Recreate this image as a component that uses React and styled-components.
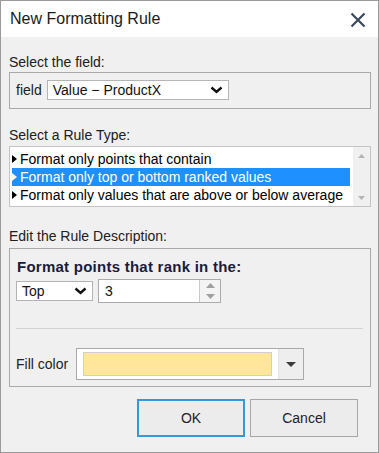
import React from "react";
import styled, { createGlobalStyle } from "styled-components";

const GlobalStyle = createGlobalStyle`
  html, body {
    margin: 0;
    padding: 0;
    background: #ffffff;
  }
  * {
    box-sizing: border-box;
  }
`;

const rules = [
  "Format only points that contain",
  "Format only top or bottom ranked values",
  "Format only values that are above or below average",
];

const Chevron = () => (
  <svg width="13" height="8" viewBox="0 0 13 8">
    <polyline
      points="1.5,1.5 6.5,6 11.5,1.5"
      fill="none"
      stroke="#111"
      strokeWidth="2.4"
    />
  </svg>
);

const Triangle = ({ down, color, w = 7, h = 4 }) => (
  <svg width={w} height={h} viewBox={`0 0 ${w} ${h}`}>
    <polygon
      points={down ? `0,0 ${w},0 ${w / 2},${h}` : `0,${h} ${w},${h} ${w / 2},0`}
      fill={color}
    />
  </svg>
);

export default function App() {
  return (
    <>
      <GlobalStyle />
      <Dialog>
        <TitleBar>
          <Title>New Formatting Rule</Title>
          <CloseButton aria-label="Close">
            <svg width="16" height="16" viewBox="0 0 16 16">
              <path
                d="M1.5 1.5 L14.5 14.5 M14.5 1.5 L1.5 14.5"
                stroke="#3b4a5b"
                strokeWidth="2.2"
              />
            </svg>
          </CloseButton>
        </TitleBar>

        <Body>
          <SectionLabel $top={17}>Select the field:</SectionLabel>
          <GroupBox $top={2}>
            <FieldRow>
              <FieldName>field</FieldName>
              <Select $width={182}>
                <span>Value − ProductX</span>
                <Chevron />
              </Select>
            </FieldRow>
          </GroupBox>

          <SectionLabel $top={18}>Select a Rule Type:</SectionLabel>
          <ListBox>
            <ListRows>
              {rules.map((rule, i) => (
                <ListRow key={rule} $selected={i === 1}>
                  <Marker>
                    <svg width="5" height="8" viewBox="0 0 5 8">
                      <polygon
                        points="0,0 5,4 0,8"
                        fill={i === 1 ? "#ffffff" : "#000000"}
                      />
                    </svg>
                  </Marker>
                  {rule}
                </ListRow>
              ))}
            </ListRows>
            <ScrollBar>
              <Triangle color="#b4b4b4" />
              <Triangle down color="#b4b4b4" />
            </ScrollBar>
          </ListBox>

          <SectionLabel $top={21}>Edit the Rule Description:</SectionLabel>
          <DescriptionBox>
            <Heading>Format points that rank in the:</Heading>
            <RankRow>
              <Select $width={77}>
                <span>Top</span>
                <Chevron />
              </Select>
              <NumberInput>
                <NumberValue>3</NumberValue>
                <Spinner>
                  <Triangle color="#a0a0a0" w={9} h={5} />
                  <Triangle down color="#a0a0a0" w={9} h={5} />
                </Spinner>
              </NumberInput>
            </RankRow>
            <Separator />
            <FillRow>
              <FieldName>Fill color</FieldName>
              <ColorPicker>
                <SwatchArea>
                  <Swatch $color="#ffe69b" />
                </SwatchArea>
                <DropButton>
                  <Triangle down color="#3a3a3a" w={10} h={5} />
                </DropButton>
              </ColorPicker>
            </FillRow>
          </DescriptionBox>

          <ButtonRow>
            <Button $primary>OK</Button>
            <Button>Cancel</Button>
          </ButtonRow>
        </Body>
      </Dialog>
    </>
  );
}

const Dialog = styled.div`
  width: 379px;
  height: 453px;
  border: 1px solid #9a9a9a;
  background: #f0f0f0;
  display: flex;
  flex-direction: column;
  font-family: "Liberation Sans", Arial, sans-serif;
  font-size: 14px;
  color: #1e1e1e;
`;

const TitleBar = styled.div`
  height: 36px;
  background: #ffffff;
  display: flex;
  align-items: center;
  justify-content: space-between;
  padding: 0 12px 0 9px;
`;

const Title = styled.div`
  font-size: 16px;
  line-height: 36px;
  color: #1a1a1a;
`;

const CloseButton = styled.div`
  display: flex;
  align-items: center;
  margin-top: 1px;
`;

const Body = styled.div`
  flex: 1;
  display: flex;
  flex-direction: column;
  padding: 0 7px 0 8px;
`;

const SectionLabel = styled.div`
  margin-top: ${({ $top }) => $top}px;
  line-height: 16px;
  height: 16px;
  color: #202020;
`;

const GroupBox = styled.div`
  margin-top: ${({ $top }) => $top}px;
  border: 1px solid #a9a9a9;
  padding: 7px 6px 8px;
`;

const FieldRow = styled.div`
  display: flex;
  align-items: center;
  gap: 5px;
`;

const FieldName = styled.span`
  line-height: 16px;
  color: #222;
`;

const Select = styled.div`
  width: ${({ $width }) => $width}px;
  height: 20px;
  background: #ffffff;
  border: 1px solid #b4b4b4;
  display: flex;
  align-items: center;
  justify-content: space-between;
  padding: 0 5px 0 5px;
  line-height: 18px;
  color: #111;
`;

const ListBox = styled.div`
  margin-top: 3px;
  height: 61px;
  border: 1px solid #c4c4c4;
  background: #ffffff;
  display: flex;
`;

const ListRows = styled.div`
  flex: 1;
  padding: 3px 2px 2px 2px;
`;

const ListRow = styled.div`
  height: 18px;
  line-height: 18px;
  width: 338px;
  white-space: nowrap;
  display: flex;
  align-items: center;
  background: ${({ $selected }) => ($selected ? "#1e90ff" : "transparent")};
  color: ${({ $selected }) => ($selected ? "#ffffff" : "#000000")};
`;

const Marker = styled.span`
  display: flex;
  align-items: center;
  width: 8px;
  margin-top: -1px;
`;

const ScrollBar = styled.div`
  width: 17px;
  background: #f0f0f0;
  display: flex;
  flex-direction: column;
  align-items: center;
  justify-content: space-between;
  padding: 7px 0 6px;
`;

const DescriptionBox = styled.div`
  margin-top: 4px;
  height: 139px;
  border: 1px solid #a9a9a9;
  padding: 9px 7px 6px 6px;
  display: flex;
  flex-direction: column;
`;

const Heading = styled.div`
  font-size: 15px;
  font-weight: bold;
  letter-spacing: 0.25px;
  line-height: 18px;
  margin-left: 1px;
  color: #1b1b3a;
`;

const RankRow = styled.div`
  margin-top: 3px;
  display: flex;
  align-items: center;
  gap: 5px;
`;

const NumberInput = styled.div`
  width: 123px;
  height: 24px;
  border: 1px solid #ababab;
  background: #ffffff;
  display: flex;
`;

const NumberValue = styled.div`
  flex: 1;
  padding-left: 6px;
  line-height: 22px;
  color: #111;
`;

const Spinner = styled.div`
  width: 21px;
  border-left: 1px solid #c8c8c8;
  background: #f4f4f4;
  display: flex;
  flex-direction: column;
  align-items: center;
  justify-content: center;
  gap: 6px;
`;

const Separator = styled.div`
  margin-top: 25px;
  height: 1px;
  background: #d2d2d2;
`;

const FillRow = styled.div`
  margin-top: 19px;
  display: flex;
  align-items: center;
  gap: 8px;
`;

const ColorPicker = styled.div`
  width: 228px;
  height: 32px;
  border: 1px solid #a9a9a9;
  background: #ffffff;
  display: flex;
`;

const SwatchArea = styled.div`
  flex: 1;
  padding: 3px 6px 3px 6px;
`;

const Swatch = styled.div`
  height: 100%;
  border: 1px solid #cfcfcf;
  background: ${({ $color }) => $color};
`;

const DropButton = styled.div`
  width: 25px;
  background: #eeeeee;
  border-left: 1px solid #e2e2e2;
  display: flex;
  align-items: center;
  justify-content: center;
`;

const ButtonRow = styled.div`
  margin-top: 12px;
  display: flex;
  justify-content: flex-end;
  gap: 5px;
  padding-right: 13px;
`;

const Button = styled.div`
  width: 108px;
  height: 38px;
  display: flex;
  align-items: center;
  justify-content: center;
  background: #ececec;
  border: ${({ $primary }) =>
    $primary ? "2px solid #3399dd" : "1px solid #a6a6a6"};
  color: #1e1e1e;
  font-size: 14px;
`;
